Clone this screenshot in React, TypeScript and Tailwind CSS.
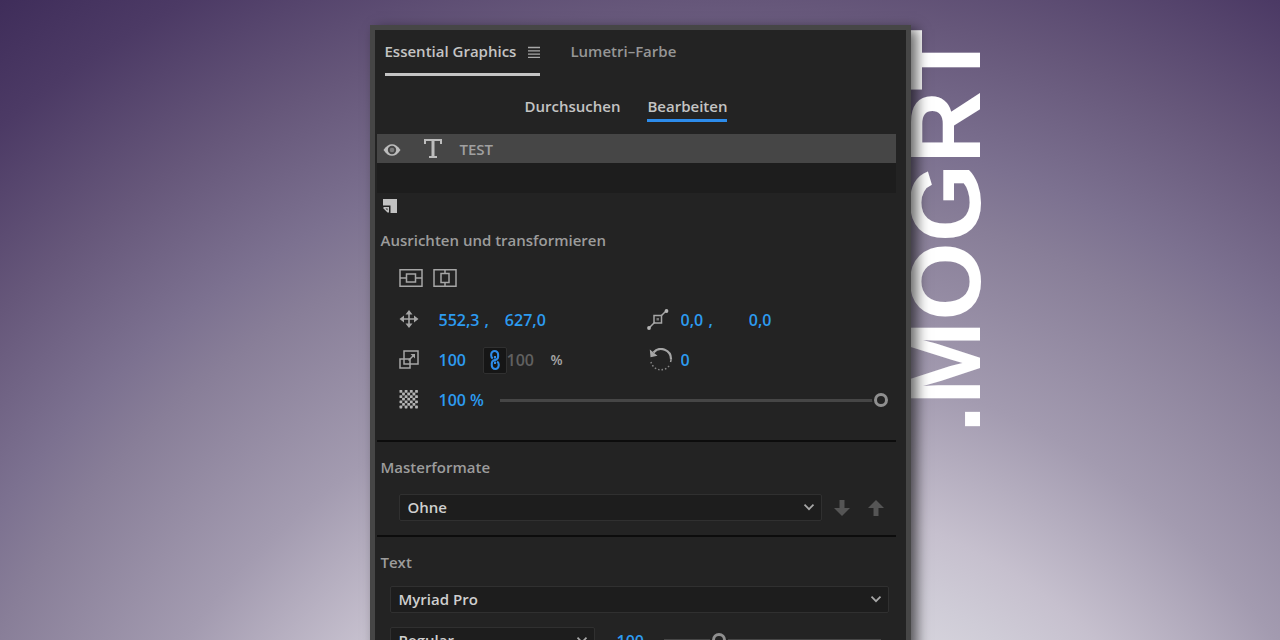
import { useState } from "react";
import type { ReactNode } from "react";

interface NumberFieldProps {
  label: string;
  value: string;
  onChange?: (value: string) => void;
  className: string;
}

function NumberField({ label, value, onChange, className }: NumberFieldProps) {
  return (
    <input
      type="text"
      aria-label={label}
      value={value}
      onChange={(e) => onChange?.(e.target.value)}
      className={`bg-transparent p-0 text-base font-semibold outline-none ${className}`}
    />
  );
}

interface SelectBoxProps {
  label: string;
  options: string[];
  className: string;
}

function SelectBox({ label, options, className }: SelectBoxProps) {
  return (
    <div className={`relative ${className}`}>
      <select
        aria-label={label}
        className="block h-[27px] w-full appearance-none rounded-xs border border-[#303030] bg-[#1d1d1d] pr-6 pl-2 text-[15px] font-semibold text-[#cfcfcf] outline-none"
      >
        {options.map((option) => (
          <option key={option}>{option}</option>
        ))}
      </select>
      <svg
        className="pointer-events-none absolute top-2 right-[7px]"
        width="12"
        height="12"
        viewBox="0 0 12 12"
        fill="none"
        stroke="#a8a8a8"
        strokeWidth="1.7"
      >
        <path d="M1.5 2.700 6 7.200l4.500-4.500" />
      </svg>
    </div>
  );
}

interface SliderProps {
  label: string;
  max: number;
  initial: number;
}

function Slider({ label, max, initial }: SliderProps) {
  const [value, setValue] = useState(initial);
  return (
    <input
      type="range"
      aria-label={label}
      min={0}
      max={max}
      value={value}
      onChange={(e) => setValue(Number(e.target.value))}
      className="h-4 min-w-0 flex-1 appearance-none bg-transparent [&::-webkit-slider-runnable-track]:h-[3px] [&::-webkit-slider-runnable-track]:bg-[#464646] [&::-webkit-slider-thumb]:-mt-[6px] [&::-webkit-slider-thumb]:h-[14px] [&::-webkit-slider-thumb]:w-[14px] [&::-webkit-slider-thumb]:appearance-none [&::-webkit-slider-thumb]:rounded-full [&::-webkit-slider-thumb]:border-3 [&::-webkit-slider-thumb]:border-[#8f8f8f] [&::-webkit-slider-thumb]:bg-[#232323] [&::-webkit-slider-thumb]:shadow-[0_0_0_2px_#232323]"
    />
  );
}

function SectionTitle({ children }: { children: ReactNode }) {
  return (
    <h2 className="pl-1 text-[15px] leading-5 font-semibold text-[#9c9c9c]">
      {children}
    </h2>
  );
}

function EyeIcon() {
  return (
    <svg width="18" height="14" viewBox="0 0 18 14">
      <path
        d="M.5 8C3 4 6 2.200 9 2.200S15 4 17.500 8C15 12 12 13.800 9 13.800S3 12 .5 8Z"
        fill="#bdbdbd"
      />
      <circle cx="9" cy="8" r="4.200" fill="#464646" />
      <circle cx="9" cy="8" r="2.300" fill="#7c7c7c" />
    </svg>
  );
}

// serif T that marks a text layer
function TextLayerIcon() {
  return (
    <svg width="20" height="20" viewBox="0 0 20 20" fill="#bdbdbd">
      <rect x="1" y="0" width="18" height="2" />
      <rect x="1" y="0" width="2" height="5" />
      <rect x="17" y="0" width="2" height="5" />
      <rect x="8.500" y="0" width="3" height="19" />
      <rect x="6" y="17" width="8" height="2" />
    </svg>
  );
}

function NewLayerIcon() {
  return (
    <svg width="14" height="14" viewBox="0 0 14 14" fill="#c2c2c2">
      <path d="M0 0h14v14H7.500V6.500H0Z" />
      <path d="M.500 8h5.500v5.500H4.500L.5 9.500Z" />
      <path d="M2.500 9.500h2v2Z" fill="#232323" />
    </svg>
  );
}

function AlignVerticalIcon() {
  return (
    <svg width="24" height="18" viewBox="0 0 24 18" fill="none" stroke="#a6a6a6" strokeWidth="1.500">
      <rect x="1" y=".75" width="22" height="16.500" />
      <rect x="7.500" y="5" width="9" height="8" />
      <path d="M1 9h6.500M16.500 9H23" />
    </svg>
  );
}

function AlignHorizontalIcon() {
  return (
    <svg width="24" height="18" viewBox="0 0 24 18" fill="none" stroke="#a6a6a6" strokeWidth="1.500">
      <rect x="1" y=".75" width="22" height="16.500" />
      <rect x="8" y="4.500" width="8" height="9" />
      <path d="M12 .75V4.500M12 13.500v3.750" />
    </svg>
  );
}

function PositionIcon() {
  return (
    <svg width="20" height="20" viewBox="0 0 20 20" fill="#a6a6a6">
      <path d="M9.200 2h1.600v14H9.200ZM3 8.200h14v1.600H3Z" />
      <path d="M10 0 13.500 4.500H6.500ZM10 18l-3.500-4.500h7ZM.5 9 5 5.500v7ZM19.500 9 15 12.500v-7Z" />
    </svg>
  );
}

function ScaleIcon() {
  return (
    <svg width="20" height="20" viewBox="0 0 20 20" fill="none" stroke="#a6a6a6" strokeWidth="1.500">
      <rect x="5" y="1" width="14" height="13" />
      <rect x="1" y="9" width="10" height="9" />
      <path d="M9.500 10.500 15 5" />
      <path d="M11.500 4H16v4.500Z" fill="#a6a6a6" stroke="none" />
    </svg>
  );
}

// checkerboard, blank where row and column parity differ
function OpacityIcon() {
  const cells: ReactNode[] = [];
  for (let row = 0; row < 7; row++) {
    for (let col = 0; col < 7; col++) {
      if ((row + col) % 2 === 0) {
        cells.push(
          <rect key={`${row}-${col}`} x={col * 2.6} y={row * 2.6} width="2.800" height="2.800" rx=".6" />
        );
      }
    }
  }
  return (
    <svg width="20" height="20" viewBox="-.5 0 20 20" fill="#b5b5b5">
      {cells}
    </svg>
  );
}

function AnchorIcon() {
  return (
    <svg width="22" height="22" viewBox="0 0 22 22" fill="none" stroke="#a6a6a6" strokeWidth="1.500">
      <path d="M2 19 8 13M14 7l5.500-5.500" />
      <rect x="7" y="6.500" width="7.500" height="7.500" />
      <rect x="9.500" y="9" width="2.500" height="2.500" fill="#777" stroke="none" />
      <circle cx="2" cy="19" r="1.900" fill="#b5b5b5" stroke="none" />
      <circle cx="19.500" cy="2" r="1.900" fill="#b5b5b5" stroke="none" />
    </svg>
  );
}

function RotationIcon() {
  return (
    <svg width="24" height="24" viewBox="0 0 24 24" fill="none" stroke="#a6a6a6">
      <path d="M4.500 4.500A10 10 0 0 1 22 11.500" strokeWidth="2.200" />
      <path d="M22 11.500Q22 13 21.500 14" strokeWidth="1.500" />
      <path d="M.8 1.500 1.500 9.200l7-1.500Z" fill="#a6a6a6" stroke="none" />
      <path d="M2 14A10.300 10.300 0 0 0 21 16.500" stroke="#858585" strokeWidth="1.500" strokeDasharray="1.500 2" />
    </svg>
  );
}

function LinkIcon() {
  return (
    <svg width="12" height="20" viewBox="0 0 12 20" fill="none" stroke="#2d8ceb" strokeWidth="2.100">
      <path d="M3.800 8.500Q2.200 7.500 2.200 5.500V4.500a3.300 3.300 0 0 1 6.900 0v2.500q0 2-2 2.700L5 10.300q-2.200.8-2.200 2.700v2.500a3.300 3.300 0 0 0 6.900 0v-1q0-2-1.600-3" />
      <path d="M6 6v2.500M6 11.500V14" />
    </svg>
  );
}

export default function App() {
  const [position, setPosition] = useState({ x: "552,3", y: "627,0" });
  const [anchor, setAnchor] = useState({ x: "0,0", y: "0,0" });
  const [scale, setScale] = useState("100");
  const [rotation, setRotation] = useState("0");
  const [opacity, setOpacity] = useState("100 %");
  const [fontSize, setFontSize] = useState("100");

  return (
    <div className="flex h-screen justify-center overflow-hidden bg-[radial-gradient(circle_farthest-corner_at_57%_159%,#d8d6de_32%,#cfccd7_37%,#c6c0ce_42%,#a39bb0_53%,#887e98_66%,#7c7190_71%,#66577a_81%,#4c3a65_92%,#3f2d5a_100%)] pt-[25px] font-['Open_Sans',sans-serif]">
      <div className="relative w-full max-w-[541px]">
        <div className="absolute top-1 left-full -ml-[24px] font-['Liberation_Sans',sans-serif] text-[101px] leading-[116px] font-bold text-white [writing-mode:vertical-rl] rotate-180">
          .MOGRT
        </div>

        <main className="relative border-[5px] border-[#464646] bg-[#232323] pb-6 shadow-[6px_4px_12px_0_rgba(0,0,0,0.6)]">
          <nav className="flex gap-[30px] pl-[10px] text-[15px] font-semibold">
            <button className="flex h-[46px] items-center gap-3 border-b-3 border-[#c4c4c4] text-[#c4c4c4]">
              Essential Graphics
              <svg width="12" height="12" viewBox="0 0 12 12" stroke="#a8a8a8" strokeWidth="1.300">
                <path d="M0 1.500h12M0 4.800h12M0 8.200h12M0 11.300h12" />
              </svg>
            </button>
            <button className="flex h-[43px] items-center text-[#969696]">
              Lumetri–Farbe
            </button>
          </nav>

          <nav className="mt-5 flex justify-center gap-[27px] pr-7 text-[15px] leading-5 font-semibold text-[#c4c4c4]">
            <button className="flex h-[26px] border-b-3 border-transparent">
              Durchsuchen
            </button>
            <button className="flex h-[26px] border-b-3 border-[#2d8ceb]">
              Bearbeiten
            </button>
          </nav>

          <div className="mt-3 mr-[10px] ml-0.5 bg-[#1d1d1d] pb-[30px]">
            <div className="flex h-[29px] items-center bg-[#464646] pl-[6px]">
              <button aria-label="Sichtbarkeit">
                <EyeIcon />
              </button>
              <span className="ml-[22px]">
                <TextLayerIcon />
              </span>
              <span className="ml-[17px] text-[15px] leading-5 font-semibold text-[#a0a0a0]">
                TEST
              </span>
            </div>
          </div>

          <div className="mr-[10px] ml-0.5">
            <button aria-label="Neue Ebene" className="mt-[6px] ml-[6px] block">
              <NewLayerIcon />
            </button>

            <section className="mt-[17px] border-b-2 border-[#0c0c0c] pb-5">
              <SectionTitle>Ausrichten und transformieren</SectionTitle>
              <div className="mt-[19px] flex gap-[10px] pl-[22px]">
                <button aria-label="Vertikal zentrieren">
                  <AlignVerticalIcon />
                </button>
                <button aria-label="Horizontal zentrieren">
                  <AlignHorizontalIcon />
                </button>
              </div>

              <div className="mt-[13px] grid grid-cols-[248px_1fr] pl-[22px] text-base font-semibold text-[#2d9bf0]">
                <div className="flex h-10 items-center">
                  <PositionIcon />
                  <NumberField
                    label="Position X"
                    value={position.x}
                    onChange={(x) => setPosition({ ...position, x })}
                    className="ml-5 w-[46px]"
                  />
                  <span>,</span>
                  <NumberField
                    label="Position Y"
                    value={position.y}
                    onChange={(y) => setPosition({ ...position, y })}
                    className="ml-4 w-[50px]"
                  />
                </div>
                <div className="flex h-10 items-center">
                  <AnchorIcon />
                  <NumberField
                    label="Ankerpunkt X"
                    value={anchor.x}
                    onChange={(x) => setAnchor({ ...anchor, x })}
                    className="ml-3 w-7"
                  />
                  <span>,</span>
                  <NumberField
                    label="Ankerpunkt Y"
                    value={anchor.y}
                    onChange={(y) => setAnchor({ ...anchor, y })}
                    className="ml-9 w-7"
                  />
                </div>

                <div className="flex h-10 items-center">
                  <ScaleIcon />
                  <NumberField
                    label="Skalierung"
                    value={scale}
                    onChange={setScale}
                    className="ml-5 w-11"
                  />
                  <button
                    aria-label="Skalierung verknüpfen"
                    className="flex h-[27px] w-6 items-center justify-center rounded-xs border border-[#303030] bg-[#161616]"
                  >
                    <LinkIcon />
                  </button>
                  <NumberField
                    label="Skalierungsbreite"
                    value={scale}
                    onChange={setScale}
                    className="w-11 text-[#606060]"
                  />
                  <span className="text-sm text-[#a6a6a6]">%</span>
                </div>
                <div className="flex h-10 items-center">
                  <span className="ml-[2px]">
                    <RotationIcon />
                  </span>
                  <NumberField
                    label="Drehung"
                    value={rotation}
                    onChange={setRotation}
                    className="ml-2 w-7"
                  />
                </div>

                <div className="col-span-2 flex h-10 items-center pr-2">
                  <OpacityIcon />
                  <NumberField
                    label="Deckkraft"
                    value={opacity}
                    onChange={setOpacity}
                    className="mr-3 ml-5 w-[49px]"
                  />
                  <Slider label="Deckkraft-Regler" max={100} initial={100} />
                </div>
              </div>
            </section>

            <section className="border-b-2 border-[#0c0c0c] pt-[15px] pb-[14px]">
              <SectionTitle>Masterformate</SectionTitle>
              <div className="mt-[17px] flex items-center pr-3 pl-[22px]">
                <SelectBox label="Masterformate" options={["Ohne"]} className="flex-1" />
                <button aria-label="Nach unten" className="ml-3">
                  <svg width="16" height="16" viewBox="0 0 16 16" fill="#555">
                    <path d="M5.500 0h5v8H16l-8 8-8-8h5.500Z" />
                  </svg>
                </button>
                <button aria-label="Nach oben" className="ml-[18px]">
                  <svg width="16" height="16" viewBox="0 0 16 16" fill="#555">
                    <path d="M5.500 16h5V8H16L8 0 0 8h5.500Z" />
                  </svg>
                </button>
              </div>
            </section>

            <section className="pt-[15px] pr-[7px]">
              <SectionTitle>Text</SectionTitle>
              <div className="mt-[14px] pl-[13px]">
                <SelectBox label="Schriftart" options={["Myriad Pro"]} className="w-full" />
                <div className="mt-[14px] flex items-center pr-2 text-[#2d9bf0]">
                  <SelectBox label="Schriftschnitt" options={["Regular"]} className="w-[205px]" />
                  <NumberField
                    label="Schriftgröße"
                    value={fontSize}
                    onChange={setFontSize}
                    className="mr-3 ml-[22px] w-[35px]"
                  />
                  <Slider label="Schriftgröße-Regler" max={400} initial={96} />
                </div>
              </div>
            </section>
          </div>
        </main>
      </div>
    </div>
  );
}
